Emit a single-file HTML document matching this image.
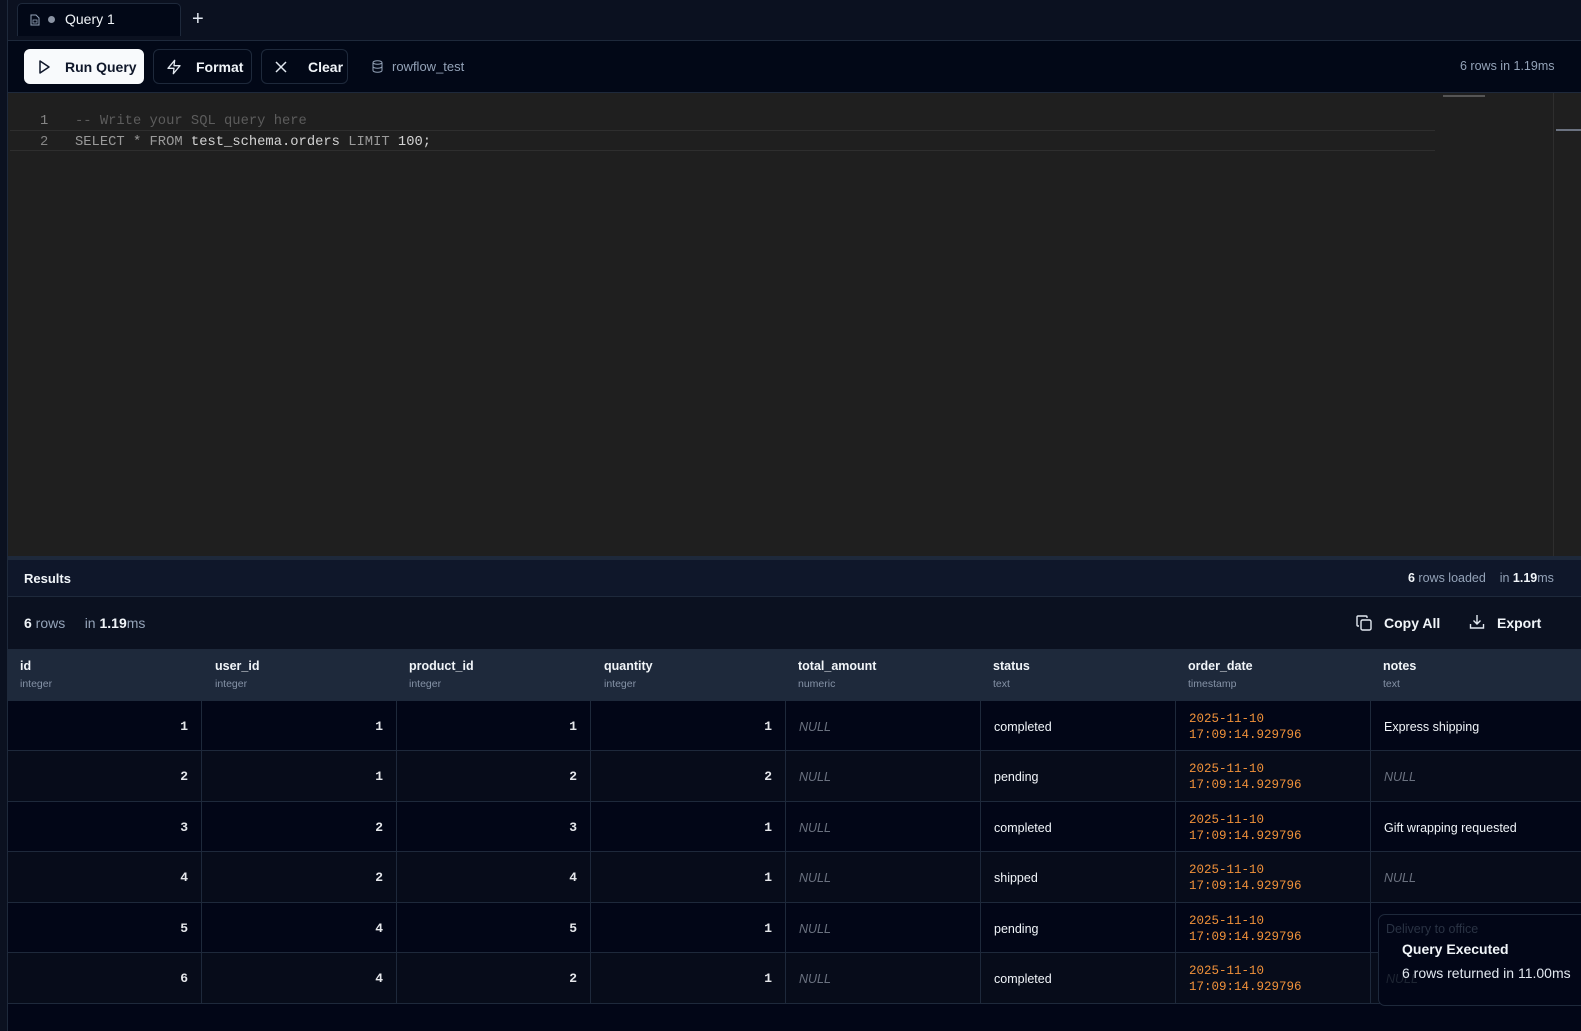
<!DOCTYPE html>
<html><head><meta charset="utf-8"><style>
*{margin:0;padding:0;box-sizing:border-box}
body{width:1581px;height:1031px;overflow:hidden;background:#020617;font-family:"Liberation Sans",sans-serif;color:#e2e8f0;position:relative}
.abs{position:absolute}
.btn{position:absolute;top:49px;height:35px;border-radius:6px;border:1px solid #1e293b;background:#020817;color:#f1f5f9;font-size:14px;font-weight:bold;display:flex;align-items:center;padding-left:12px}
.btn svg{margin-right:14px}
.mono{font-family:"Liberation Mono",monospace}
.th{position:absolute;top:649px;height:52px;padding:10px 0 0 12px}
.th b{display:block;font-size:12.5px;color:#f1f5f9}
.th span{display:block;font-size:10.5px;color:#8592a6;margin-top:5px}
.row{position:absolute;left:8px;width:1573px;height:51px;border-bottom:1px solid #1e293b}
.c{position:absolute;top:0;height:51px;border-right:1px solid #1e293b;font-size:12.5px;display:flex;align-items:center}
.n{justify-content:flex-end;padding-right:13px;font-family:"Liberation Mono",monospace;font-size:13px;font-weight:bold;color:#e5e7eb}
.t{padding-left:13px;color:#f1f5f9}
.null{padding-left:13px;color:#6b7280;font-style:italic}
.d{padding-left:13px;color:#f0913a;font-family:"Liberation Mono",monospace;font-size:12.5px;line-height:16px}
</style></head><body>
<div class="abs" style="left:0;top:0;width:8px;height:1031px;background:#0b1120;border-right:1px solid #1e293b"></div>
<div class="abs" style="left:8px;top:0;width:1573px;height:41px;background:#0b1120;border-bottom:1px solid #1e293b"></div>
<div class="abs" style="left:17px;top:3px;width:164px;height:33px;background:#020817;border:1px solid #1e293b;border-bottom:none;border-radius:5px 5px 0 0"></div>
<svg class="abs" style="left:30px;top:14px" width="10" height="12" viewBox="0 0 10 12"><path d="M1 1h5l3 3v7H1z" fill="none" stroke="#94a3b8" stroke-width="1"/><rect x="3" y="6" width="4" height="3" fill="none" stroke="#94a3b8" stroke-width=".8"/></svg>
<div class="abs" style="left:48px;top:16px;width:7px;height:7px;border-radius:50%;background:#8a93a3"></div>
<div class="abs" style="left:65px;top:11px;font-size:14px;color:#f1f5f9">Query 1</div>
<div class="abs" style="left:192px;top:8px;font-size:20px;color:#e2e8f0">+</div>
<div class="abs" style="left:8px;top:41px;width:1573px;height:52px;background:#020817;border-bottom:1px solid #1e293b"></div>
<div class="btn" style="left:24px;width:120px;background:#f8fafc;color:#0f172a;border-color:#f8fafc"><svg width="14" height="16" viewBox="0 0 14 16"><path d="M3 2l9 6-9 6z" fill="none" stroke="#0f172a" stroke-width="1.5" stroke-linejoin="round"/></svg>Run Query</div>
<div class="btn" style="left:153px;width:99px"><svg width="16" height="16" viewBox="0 0 24 24"><path d="M13 2L3 14h9l-1 8 10-12h-9z" fill="none" stroke="#e2e8f0" stroke-width="2" stroke-linejoin="round"/></svg>Format</div>
<div class="btn" style="left:261px;width:87px"><svg width="14" height="14" viewBox="0 0 14 14" style="margin-right:20px"><path d="M2 2l10 10M12 2L2 12" stroke="#e2e8f0" stroke-width="1.5"/></svg>Clear</div>
<svg class="abs" style="left:372px;top:60px" width="11" height="13" viewBox="0 0 11 13"><ellipse cx="5.5" cy="2.5" rx="4.5" ry="1.8" fill="none" stroke="#94a3b8"/><path d="M1 2.5v8c0 1 2 1.8 4.5 1.8S10 11.5 10 10.5v-8M1 6.5c0 1 2 1.8 4.5 1.8S10 7.5 10 6.5" fill="none" stroke="#94a3b8"/></svg>
<div class="abs" style="left:392px;top:59px;font-size:13px;color:#94a3b8">rowflow_test</div>
<div class="abs" style="left:1460px;top:59px;font-size:12.5px;color:#94a3b8">6 rows in 1.19ms</div>
<div class="abs" style="left:8px;top:93px;width:1573px;height:463px;background:#1f1f1f"></div>
<div class="abs" style="left:10px;top:130px;width:1425px;height:21px;border-top:1px solid #2e2e2e;border-bottom:1px solid #2e2e2e"></div>
<div class="abs" style="left:1553px;top:93px;width:1px;height:463px;background:#2e2e2e"></div>
<div class="abs" style="left:1556px;top:129px;width:25px;height:2px;background:#6b7280"></div>
<div class="abs" style="left:1443px;top:95px;width:42px;height:2px;background:#555"></div>
<div class="abs mono" style="left:40px;top:111px;font-size:13.8px;color:#858585;line-height:21px">1<br>2</div>
<div class="abs mono" style="left:75px;top:111px;font-size:13.8px;line-height:21px;white-space:pre;color:#d4d4d4"><span style="color:#5c5c5c">-- Write your SQL query here</span>
<span style="color:#9a9a9a">SELECT * FROM</span> test_schema.orders <span style="color:#9a9a9a">LIMIT</span> 100;</div>
<div class="abs" style="left:8px;top:556px;width:1573px;height:4px;background:#1e293b"></div>
<div class="abs" style="left:8px;top:560px;width:1573px;height:37px;background:#0f172a;border-bottom:1px solid #1e293b"></div>
<div class="abs" style="left:24px;top:571px;font-size:13px;font-weight:bold;color:#f1f5f9">Results</div>
<div class="abs" style="left:1408px;top:571px;font-size:12.5px;color:#94a3b8"><b style="color:#f1f5f9">6</b> rows loaded &nbsp;&nbsp; in <b style="color:#f1f5f9">1.19</b>ms</div>
<div class="abs" style="left:8px;top:597px;width:1573px;height:52px;background:#0b1120"></div>
<div class="abs" style="left:24px;top:615px;font-size:14px;color:#94a3b8"><b style="color:#f1f5f9">6</b> rows &nbsp;&nbsp;&nbsp; in <b style="color:#f1f5f9">1.19</b>ms</div>
<svg class="abs" style="left:1356px;top:615px" width="16" height="16" viewBox="0 0 16 16"><rect x="5" y="5" width="10" height="10" rx="1.5" fill="none" stroke="#e2e8f0" stroke-width="1.4"/><path d="M3 11H2a1 1 0 0 1-1-1V2a1 1 0 0 1 1-1h8a1 1 0 0 1 1 1v1" fill="none" stroke="#e2e8f0" stroke-width="1.4"/></svg>
<div class="abs" style="left:1384px;top:615px;font-size:14px;font-weight:bold;color:#f1f5f9">Copy All</div>
<svg class="abs" style="left:1469px;top:614px" width="16" height="16" viewBox="0 0 16 16"><path d="M8 1v9M4.5 6.5L8 10l3.5-3.5M1.5 10v4h13v-4" fill="none" stroke="#e2e8f0" stroke-width="1.4"/></svg>
<div class="abs" style="left:1497px;top:615px;font-size:14px;font-weight:bold;color:#f1f5f9">Export</div>
<div class="abs" style="left:8px;top:649px;width:1573px;height:52px;background:#1e293b"></div>
<div class="th" style="left:8px"><b>id</b><span>integer</span></div>
<div class="th" style="left:203px"><b>user_id</b><span>integer</span></div>
<div class="th" style="left:397px"><b>product_id</b><span>integer</span></div>
<div class="th" style="left:592px"><b>quantity</b><span>integer</span></div>
<div class="th" style="left:786px"><b>total_amount</b><span>numeric</span></div>
<div class="th" style="left:981px"><b>status</b><span>text</span></div>
<div class="th" style="left:1176px"><b>order_date</b><span>timestamp</span></div>
<div class="th" style="left:1371px"><b>notes</b><span>text</span></div>

<div class="row" style="top:701px;height:50px;background:#020617"><div class="c n" style="left:0;width:194px">1</div><div class="c n" style="left:194px;width:195px">1</div><div class="c n" style="left:389px;width:194px">1</div><div class="c n" style="left:583px;width:195px">1</div><div class="c null" style="left:778px;width:195px">NULL</div><div class="c t" style="left:973px;width:195px">completed</div><div class="c d" style="left:1168px;width:195px">2025-11-10<br>17:09:14.929796</div><div class="c t" style="left:1363px;width:210px;border:none">Express shipping</div></div>
<div class="row" style="top:751px;background:#070c1a"><div class="c n" style="left:0;width:194px">2</div><div class="c n" style="left:194px;width:195px">1</div><div class="c n" style="left:389px;width:194px">2</div><div class="c n" style="left:583px;width:195px">2</div><div class="c null" style="left:778px;width:195px">NULL</div><div class="c t" style="left:973px;width:195px">pending</div><div class="c d" style="left:1168px;width:195px">2025-11-10<br>17:09:14.929796</div><div class="c null" style="left:1363px;width:210px;border:none">NULL</div></div>
<div class="row" style="top:802px;height:50px;background:#020617"><div class="c n" style="left:0;width:194px">3</div><div class="c n" style="left:194px;width:195px">2</div><div class="c n" style="left:389px;width:194px">3</div><div class="c n" style="left:583px;width:195px">1</div><div class="c null" style="left:778px;width:195px">NULL</div><div class="c t" style="left:973px;width:195px">completed</div><div class="c d" style="left:1168px;width:195px">2025-11-10<br>17:09:14.929796</div><div class="c t" style="left:1363px;width:210px;border:none">Gift wrapping requested</div></div>
<div class="row" style="top:852px;background:#070c1a"><div class="c n" style="left:0;width:194px">4</div><div class="c n" style="left:194px;width:195px">2</div><div class="c n" style="left:389px;width:194px">4</div><div class="c n" style="left:583px;width:195px">1</div><div class="c null" style="left:778px;width:195px">NULL</div><div class="c t" style="left:973px;width:195px">shipped</div><div class="c d" style="left:1168px;width:195px">2025-11-10<br>17:09:14.929796</div><div class="c null" style="left:1363px;width:210px;border:none">NULL</div></div>
<div class="row" style="top:903px;height:50px;background:#020617"><div class="c n" style="left:0;width:194px">5</div><div class="c n" style="left:194px;width:195px">4</div><div class="c n" style="left:389px;width:194px">5</div><div class="c n" style="left:583px;width:195px">1</div><div class="c null" style="left:778px;width:195px">NULL</div><div class="c t" style="left:973px;width:195px">pending</div><div class="c d" style="left:1168px;width:195px">2025-11-10<br>17:09:14.929796</div><div class="c t" style="left:1363px;width:210px;border:none"></div></div>
<div class="row" style="top:953px;background:#070c1a"><div class="c n" style="left:0;width:194px">6</div><div class="c n" style="left:194px;width:195px">4</div><div class="c n" style="left:389px;width:194px">2</div><div class="c n" style="left:583px;width:195px">1</div><div class="c null" style="left:778px;width:195px">NULL</div><div class="c t" style="left:973px;width:195px">completed</div><div class="c d" style="left:1168px;width:195px">2025-11-10<br>17:09:14.929796</div><div class="c t" style="left:1363px;width:210px;border:none"></div></div>
<div class="abs" style="left:1378px;top:914px;width:220px;height:92px;background:#020617;border:1px solid #1e293b;border-radius:7px;overflow:hidden">
<div style="position:absolute;left:7px;top:7px;font-size:12.5px;color:#2a3344">Delivery to office</div>
<div style="position:absolute;left:7px;top:57px;font-size:12.5px;font-style:italic;color:#1e2533">NULL</div>
<div style="position:absolute;left:23px;top:26px;font-size:14px;font-weight:bold;color:#f1f5f9">Query Executed</div>
<div style="position:absolute;left:23px;top:50px;font-size:14px;color:#e2e8f0;white-space:nowrap">6 rows returned in 11.00ms</div>
</div>
</body></html>
